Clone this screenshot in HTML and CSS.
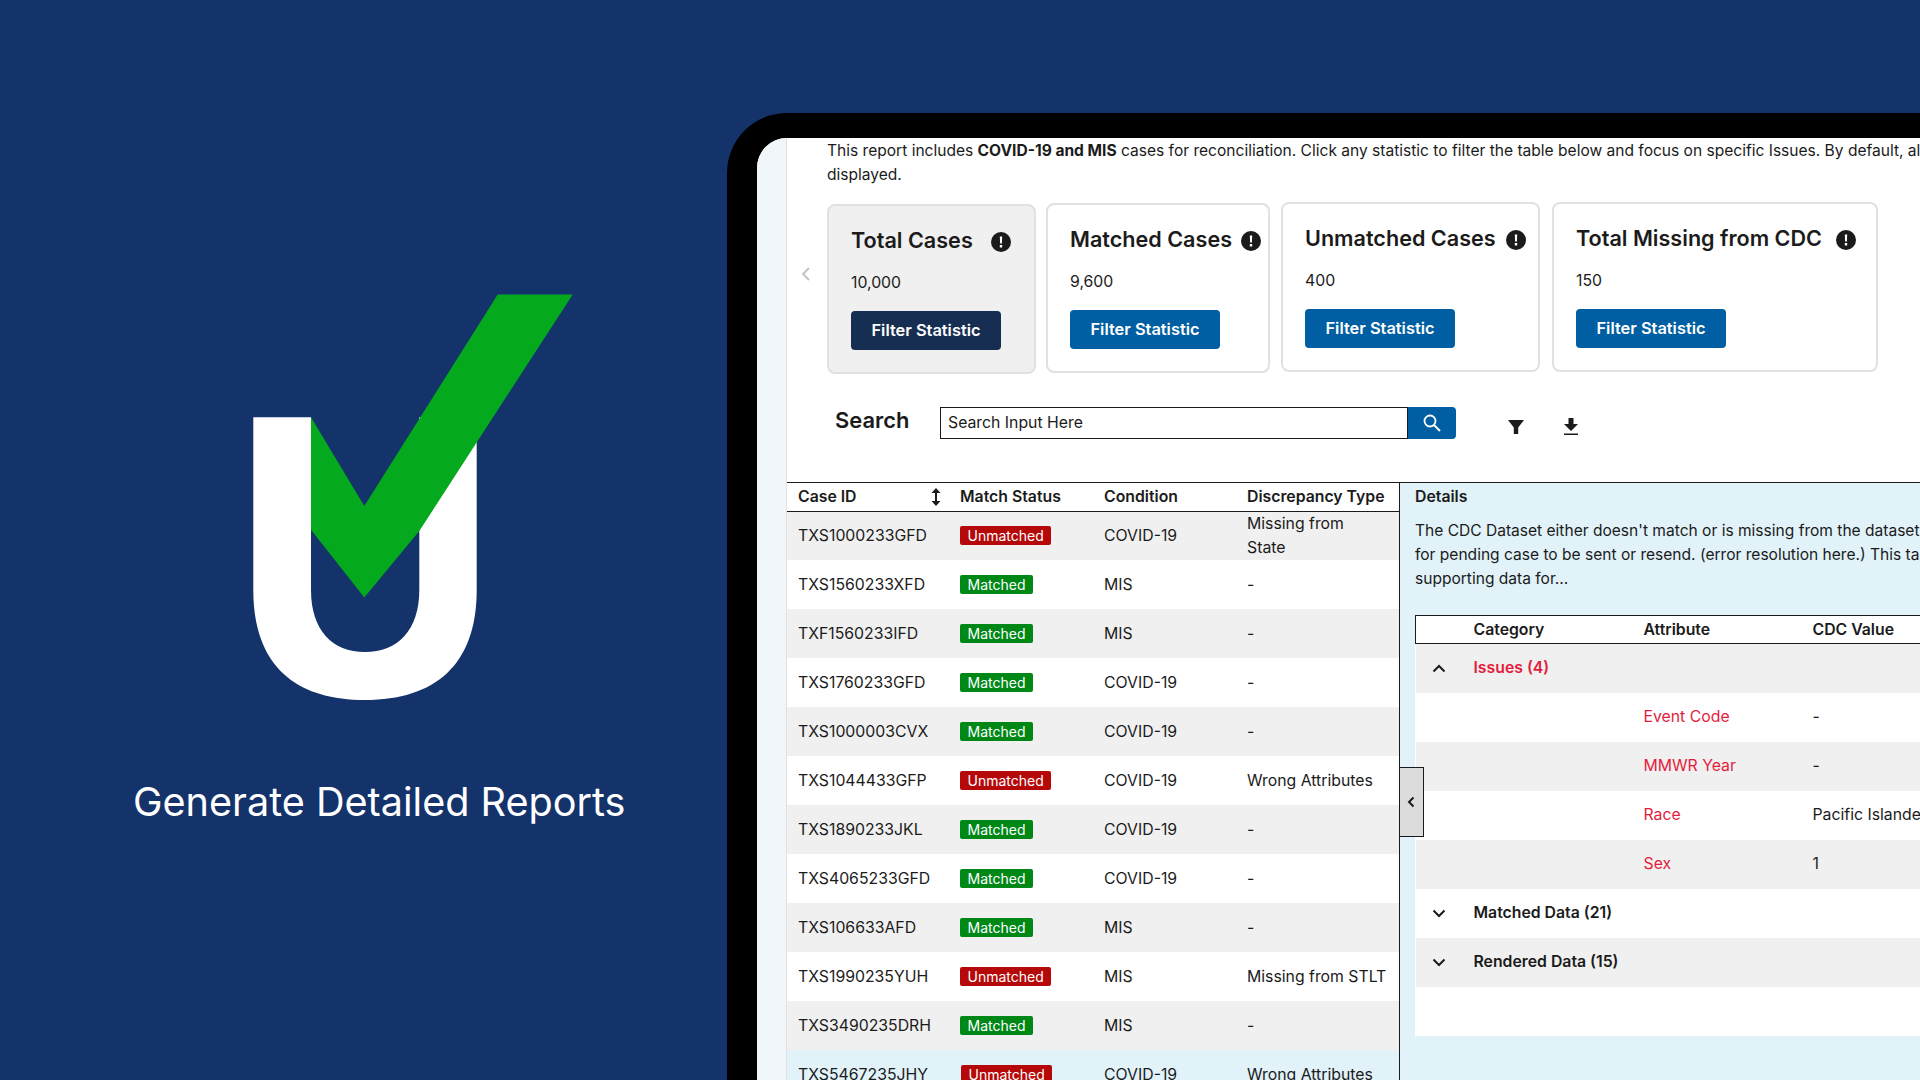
FILE: index.html
```html
<!DOCTYPE html>
<html lang="en">
<head>
  <meta charset="UTF-8">
  <title>Generate Detailed Reports</title>
  <link rel="stylesheet" href="styles.css">
</head>
<body>
  <section class="promo">
    <svg class="logo" width="340" height="420" viewBox="240 290 340 420">
      <path fill="#fff" d="M253.3 417.3H311V590C311 630 332 652 365 652C398 652 419.3 630 419.3 590V417.3H476.7V590C476.7 665 435 700 365 700C295 700 253.3 665 253.3 590Z"/>
      <path fill="#04a91d" d="M497.7 294.4H572.7L419.3 531L364.3 597.5L311 529.8V417.3L364.3 506Z"/>
    </svg>
    <h1>Generate Detailed Reports</h1>
  </section>

  <section class="device">
    <div class="screen">
      <div class="rail"></div>
      <main class="report">
        <p class="intro">This report includes <b>COVID-19 and MIS</b> cases for reconciliation. Click any statistic to filter the table below and focus on specific Issues. By default, all cases are<br>displayed.</p>

        <div class="stats">
          <svg class="stats-prev" width="10" height="14" viewBox="0 0 10 14"><path d="M8 1L2 7l6 6" fill="none" stroke="#c4c4c4" stroke-width="2"/></svg>
          <div class="card card-active">
            <h2>Total Cases <svg class="alert" viewBox="0 0 20 20"><circle cx="10" cy="10" r="10" fill="#1b1b1b"/><path d="M8.8 4.5h2.4l-.3 7H9.100zM8.800 13h2.400v2.400H8.800z" fill="#fff"/></svg></h2>
            <p>10,000</p>
            <button>Filter Statistic</button>
          </div>
          <div class="card card-matched">
            <h2>Matched Cases <svg class="alert" viewBox="0 0 20 20"><circle cx="10" cy="10" r="10" fill="#1b1b1b"/><path d="M8.8 4.5h2.4l-.3 7H9.100zM8.800 13h2.400v2.400H8.800z" fill="#fff"/></svg></h2>
            <p>9,600</p>
            <button>Filter Statistic</button>
          </div>
          <div class="card card-unmatched">
            <h2>Unmatched Cases <svg class="alert" viewBox="0 0 20 20"><circle cx="10" cy="10" r="10" fill="#1b1b1b"/><path d="M8.8 4.5h2.4l-.3 7H9.100zM8.800 13h2.400v2.400H8.800z" fill="#fff"/></svg></h2>
            <p>400</p>
            <button>Filter Statistic</button>
          </div>
          <div class="card card-missing">
            <h2>Total Missing from CDC <svg class="alert" viewBox="0 0 20 20"><circle cx="10" cy="10" r="10" fill="#1b1b1b"/><path d="M8.8 4.5h2.4l-.3 7H9.100zM8.800 13h2.400v2.400H8.800z" fill="#fff"/></svg></h2>
            <p>150</p>
            <button>Filter Statistic</button>
          </div>
        </div>

        <div class="search-row">
          <span class="search-label">Search</span>
          <div class="search-box">
            <span class="search-input">Search Input Here</span>
            <span class="search-btn">
              <svg width="20" height="20" viewBox="0 0 20 20"><circle cx="8" cy="8" r="5.500" fill="none" stroke="#fff" stroke-width="1.800"/><path d="M12 12l6 6" stroke="#fff" stroke-width="2"/></svg>
            </span>
          </div>
          <svg class="tool-filter" width="16" height="16" viewBox="0 0 16 16"><path d="M0 1h16L10.200 8.500V15H5.800V8.500z" fill="#1b1b1b"/></svg>
          <svg class="tool-download" width="14" height="18" viewBox="0 0 14 18"><path d="M4.500 0h5v6H14l-7 7-7-7h4.500zM0 15.500h14V17H0z" fill="#1b1b1b"/></svg>
        </div>

        <div class="split">
          <div class="cases">
            <table>
              <thead>
                <tr>
                  <th class="col-id">Case ID
                    <svg class="sort" width="10" height="18" viewBox="0 0 10 18"><path d="M5 0l4.500 5H6v8h3.500L5 18 .5 13H4V5H.5z" fill="#1b1b1b"/></svg>
                  </th>
                  <th class="col-status">Match Status</th>
                  <th class="col-cond">Condition</th>
                  <th class="col-type">Discrepancy Type</th>
                </tr>
              </thead>
              <tbody>
                <tr><td>TXS1000233GFD</td><td><span class="badge bad">Unmatched</span></td><td>COVID-19</td><td class="tight">Missing from State</td></tr>
                <tr><td>TXS1560233XFD</td><td><span class="badge ok">Matched</span></td><td>MIS</td><td>-</td></tr>
                <tr><td>TXF1560233IFD</td><td><span class="badge ok">Matched</span></td><td>MIS</td><td>-</td></tr>
                <tr><td>TXS1760233GFD</td><td><span class="badge ok">Matched</span></td><td>COVID-19</td><td>-</td></tr>
                <tr><td>TXS1000003CVX</td><td><span class="badge ok">Matched</span></td><td>COVID-19</td><td>-</td></tr>
                <tr><td>TXS1044433GFP</td><td><span class="badge bad">Unmatched</span></td><td>COVID-19</td><td>Wrong Attributes</td></tr>
                <tr><td>TXS1890233JKL</td><td><span class="badge ok">Matched</span></td><td>COVID-19</td><td>-</td></tr>
                <tr><td>TXS4065233GFD</td><td><span class="badge ok">Matched</span></td><td>COVID-19</td><td>-</td></tr>
                <tr><td>TXS106633AFD</td><td><span class="badge ok">Matched</span></td><td>MIS</td><td>-</td></tr>
                <tr><td>TXS1990235YUH</td><td><span class="badge bad">Unmatched</span></td><td>MIS</td><td>Missing from STLT</td></tr>
                <tr><td>TXS3490235DRH</td><td><span class="badge ok">Matched</span></td><td>MIS</td><td>-</td></tr>
                <tr class="selected"><td>TXS5467235JHY</td><td><span class="badge bad">Unmatched</span></td><td>COVID-19</td><td>Wrong Attributes</td></tr>
              </tbody>
            </table>
          </div>

          <aside class="details">
            <button class="collapse"><svg width="8" height="12" viewBox="0 0 8 12"><path d="M6.500 1.500L2 6l4.500 4.500" fill="none" stroke="#1b1b1b" stroke-width="2"/></svg></button>
            <h3>Details</h3>
            <p class="details-text">The CDC Dataset either doesn't match or is missing from the dataset sent<br>for pending case to be sent or resend. (error resolution here.) This table shows<br>supporting data for...</p>
            <table class="attrs">
              <thead>
                <tr><th class="col-toggle"></th><th class="col-cat">Category</th><th class="col-attr">Attribute</th><th class="col-cdc">CDC Value</th></tr>
              </thead>
              <tbody>
                <tr class="group issue"><td><svg class="chev" width="14" height="9" viewBox="0 0 14 9"><path d="M1.500 7.500L7 2l5.500 5.500" fill="none" stroke="#1b1b1b" stroke-width="2"/></svg></td><td>Issues (4)</td><td></td><td></td></tr>
                <tr class="issue-row"><td></td><td></td><td class="red">Event Code</td><td>-</td></tr>
                <tr class="issue-row"><td></td><td></td><td class="red">MMWR Year</td><td>-</td></tr>
                <tr class="issue-row"><td></td><td></td><td class="red">Race</td><td>Pacific Islander</td></tr>
                <tr class="issue-row"><td></td><td></td><td class="red">Sex</td><td>1</td></tr>
                <tr class="group"><td><svg class="chev" width="14" height="9" viewBox="0 0 14 9"><path d="M1.500 1.500L7 7l5.500-5.500" fill="none" stroke="#1b1b1b" stroke-width="2"/></svg></td><td>Matched Data (21)</td><td></td><td></td></tr>
                <tr class="group"><td><svg class="chev" width="14" height="9" viewBox="0 0 14 9"><path d="M1.500 1.500L7 7l5.500-5.500" fill="none" stroke="#1b1b1b" stroke-width="2"/></svg></td><td>Rendered Data (15)</td><td></td><td></td></tr>
                <tr><td></td><td></td><td></td><td></td></tr>
              </tbody>
            </table>
          </aside>
        </div>
      </main>
    </div>
  </section>
</body>
</html>
```

FILE: styles.css
```css
* {
  box-sizing: border-box;
}

html, body {
  margin: 0;
  height: 1080px;
  overflow: hidden;
}

body {
  display: flex;
  background: #14336b;
  font-family: Inter, "Liberation Sans", sans-serif;
  font-size: 15.800px;
  color: #1b1b1b;
}

/* left side with logo */
.promo {
  width: 727px;
  flex: none;
  padding-top: 290px;
  color: #fff;
}

.logo {
  display: block;
  margin-left: 240px;
}

.promo h1 {
  margin: 68px 0 0 133px;
  font-size: 39.600px;
  line-height: 48px;
  font-weight: 400;
  white-space: nowrap;
}

/* tablet */
.device {
  flex: 1;
  min-width: 0;
  margin-top: 113px;
  padding: 25px 0 0 30px;
  background: #000;
  border-radius: 60px 0 0 0;
}

.screen {
  display: flex;
  height: 100%;
  background: #fff;
  border-radius: 30px 0 0 0;
  overflow: hidden;
}

.rail {
  width: 30px;
  flex: none;
  background: #f0f6f9;
  border-right: 1px solid #dfe1e2;
}

.report {
  flex: 1;
  min-width: 0;
  display: flex;
  flex-direction: column;
}

.intro {
  margin: 1px 0 0 40px;
  font-size: 15.550px;
  line-height: 24px;
  white-space: nowrap;
}

/* stat cards */
.stats {
  position: relative;
  display: flex;
  align-items: flex-start;
  height: 172px;
  margin: 15px 0 0 40px;
}

.stats-prev {
  position: absolute;
  left: -26px;
  top: 65px;
}

.card {
  height: 170px;
  padding: 19px 0 0 22px;
  border: 2px solid #dfe1e2;
  border-radius: 8px;
  flex: none;
}

.card h2 {
  margin: 0;
  font-size: 21.600px;
  line-height: 30px;
  font-weight: 600;
  white-space: nowrap;
  position: relative;
}

.alert {
  position: absolute;
  top: 7px;
  width: 20px;
  height: 20px;
}

.card p {
  margin: 16px 0 0;
  line-height: 24px;
}

.card button {
  display: block;
  width: 150px;
  height: 39px;
  margin-top: 16px;
  padding: 0 0 1px;
  background: #005ea2;
  border: none;
  border-radius: 4px;
  color: #fff;
  font: 600 16.400px Inter, "Liberation Sans", sans-serif;
}

.card-active {
  width: 209px;
  margin-top: 2px;
  background: #f0f0f0;
}

.card-active button {
  background: #162e51;
}

.card-active .alert {
  left: 140px;
}

.card-matched {
  width: 224px;
  margin: 1px 0 0 10px;
}

.card-matched .alert {
  left: 171px;
}

.card-unmatched {
  width: 259px;
  margin-left: 11px;
}

.card-unmatched .alert {
  left: 201px;
}

.card-missing {
  width: 326px;
  margin-left: 12px;
}

.card-missing .alert {
  left: 260px;
}

/* search */
.search-row {
  display: flex;
  align-items: center;
  height: 32px;
  margin: 33px 0 0 48px;
}

.search-label {
  width: 105px;
  font-size: 21.900px;
  font-weight: 600;
  margin-top: -6px;
}

.search-box {
  display: flex;
  width: 515.500px;
  height: 32px;
}

.search-input {
  flex: 1;
  padding-left: 7px;
  border: 1px solid #1b1b1b;
  background: #fff;
  line-height: 30px;
}

.search-btn {
  width: 47.500px;
  display: flex;
  align-items: center;
  justify-content: center;
  background: #005ea2;
  border-radius: 0 4px 4px 0;
}

.tool-filter {
  margin: 8px 0 0 52px;
}

.tool-download {
  margin: 8px 0 0 40px;
}

/* split view */
.split {
  flex: 1;
  min-height: 0;
  display: flex;
  margin-top: 43px;
  border-top: 1.500px solid #1b1b1b;
}

.cases {
  width: 612px;
  flex: none;
}

table {
  border-collapse: collapse;
  table-layout: fixed;
}

.cases table {
  width: 612px;
}

th {
  text-align: left;
  font-weight: 600;
  padding: 0;
}

td {
  padding: 0;
  height: 49px;
  line-height: 24px;
}

.cases th {
  height: 28px;
  border-bottom: 1.500px solid #1b1b1b;
}

.col-id {
  width: 173px;
  padding-left: 11px;
  position: relative;
}

.col-status {
  width: 144px;
}

.col-cond {
  width: 143px;
}

.sort {
  position: absolute;
  left: 144px;
  top: 5px;
}

.cases td:first-child {
  padding-left: 11px;
}

.cases tbody tr:nth-child(odd) {
  background: #f0f0f0;
}

.cases tbody tr.selected {
  background: #e1f2f9;
}

.tight {
  padding-right: 20px;
}

.badge {
  display: inline-block;
  height: 19px;
  margin-top: -2px;
  padding: 0 7.500px;
  border-radius: 2px;
  color: #fff;
  font-size: 14px;
  line-height: 19px;
  vertical-align: middle;
}

.bad {
  background: #b50909;
}

.ok {
  background: #008817;
}

.selected .badge {
  margin-left: 1px;
}

/* details panel */
.details {
  position: relative;
  flex: 1;
  min-width: 0;
  padding-left: 15px;
  background: #e1f2f9;
  border-left: 1.500px solid #1b1b1b;
}

.collapse {
  position: absolute;
  left: -1.500px;
  top: 284px;
  width: 25px;
  height: 70px;
  padding: 0;
  background: #dcdcdc;
  border: 1.500px solid #1b1b1b;
}

.collapse svg {
  display: block;
  margin: 0 auto;
}

.details h3 {
  margin: 0;
  font-size: 15.800px;
  line-height: 27px;
  font-weight: 600;
}

.details-text {
  margin: 9px 0 0;
  font-size: 15.550px;
  line-height: 24px;
  white-space: nowrap;
}

.attrs {
  width: 560px;
  margin-top: 24px;
  background: #fff;
}

.attrs th {
  height: 28px;
  border-top: 1.500px solid #1b1b1b;
  border-bottom: 1.500px solid #1b1b1b;
}

.col-toggle {
  width: 58px;
  border-left: 1.500px solid #1b1b1b;
}

.col-cat {
  width: 170px;
}

.col-attr {
  width: 169px;
}

.attrs tbody tr:nth-child(odd) {
  background: #f0f0f0;
}

.attrs tbody tr:last-child {
  background: #fff;
}

.chev {
  display: block;
  margin-left: 16px;
}

.group td {
  font-weight: 600;
}

.issue td {
  color: #e41d3d;
}

.red {
  color: #e41d3d;
}
```
